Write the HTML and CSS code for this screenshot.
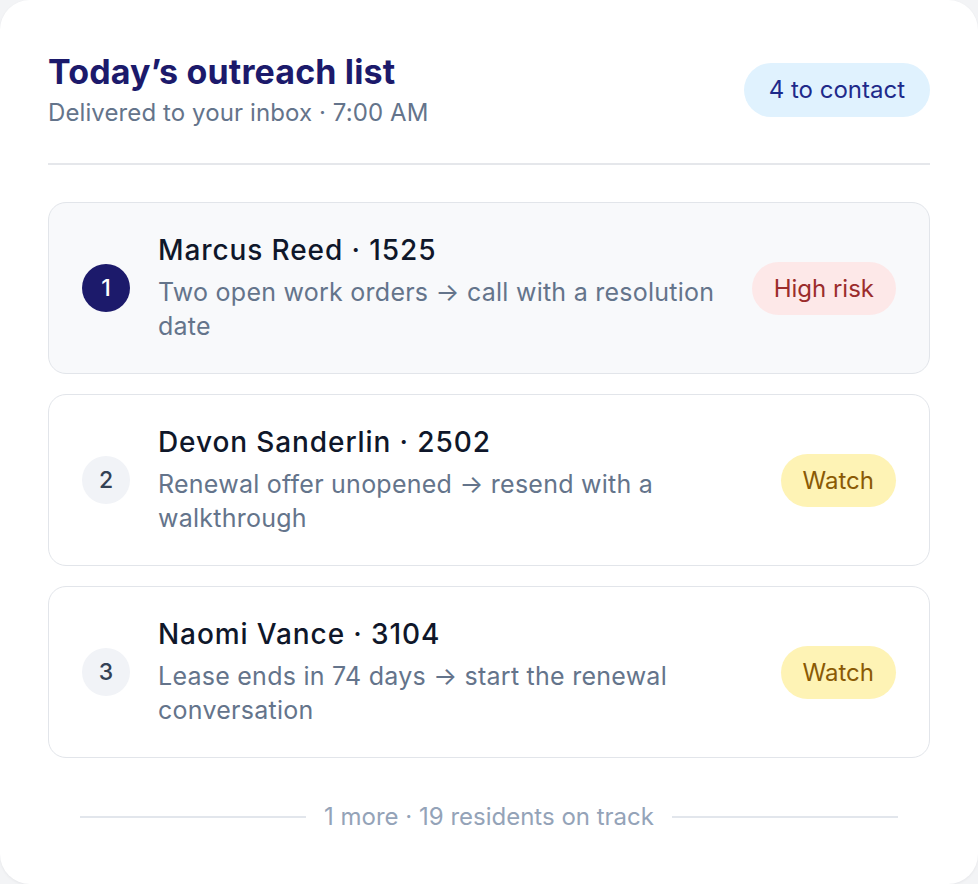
FILE: index.html
```html
<!DOCTYPE html>
<html lang="en">
<head>
<meta charset="utf-8">
<title>Today's outreach list</title>
<link rel="stylesheet" href="styles.css">
</head>
<body>
<main class="card">
  <header class="header">
    <div class="heading">
      <h1 class="title">Today’s outreach list</h1>
      <p class="subtitle">Delivered to your inbox · 7:00 AM</p>
    </div>
    <span class="count-pill">4 to contact</span>
  </header>

  <ol class="list">
    <li class="item item-top">
      <span class="num num-primary">1</span>
      <div class="body">
        <div class="name">Marcus Reed · 1525</div>
        <div class="desc">Two open work orders → call with a resolution date</div>
      </div>
      <span class="tag tag-high">High risk</span>
    </li>
    <li class="item">
      <span class="num">2</span>
      <div class="body">
        <div class="name">Devon Sanderlin · 2502</div>
        <div class="desc">Renewal offer unopened → resend with a walkthrough</div>
      </div>
      <span class="tag tag-watch">Watch</span>
    </li>
    <li class="item">
      <span class="num">3</span>
      <div class="body">
        <div class="name">Naomi Vance · 3104</div>
        <div class="desc">Lease ends in 74 days → start the renewal conversation</div>
      </div>
      <span class="tag tag-watch">Watch</span>
    </li>
  </ol>

  <footer class="footer">
    <span class="rule"></span>
    <span class="footer-text">1 more · 19 residents on track</span>
    <span class="rule"></span>
  </footer>
</main>
</body>
</html>
```

FILE: styles.css
```css
* { box-sizing: border-box; }

html, body {
  margin: 0;
  padding: 0;
  background: #f3f4f6;
}

body {
  font-family: "Inter", "Noto Sans", "Liberation Sans", sans-serif;
  -webkit-font-smoothing: antialiased;
}

.card {
  background: #ffffff;
  width: 978px;
  min-height: 884px;
  border-radius: 30px;
  padding: 52px 48px 40px;
  box-shadow: 0 1px 3px rgba(15, 23, 42, 0.06);
}

.header {
  display: flex;
  align-items: center;
  justify-content: space-between;
  padding-bottom: 35px;
  border-bottom: 2px solid #e5e7eb;
}

.title {
  margin: 0;
  font-size: 34px;
  line-height: 40px;
  font-weight: 700;
  color: #1c1a6b;
  letter-spacing: 0.15px;
}

.subtitle {
  margin: 6px 0 0;
  font-size: 24px;
  line-height: 30px;
  color: #64748b;
  letter-spacing: 0.1px;
}

.count-pill {
  background: #e0f2fe;
  color: #1e2a8a;
  font-size: 24px;
  line-height: 28px;
  padding: 13px 25px;
  border-radius: 999px;
}

.list {
  list-style: none;
  margin: 37px 0 0;
  padding: 0;
  display: flex;
  flex-direction: column;
  gap: 20px;
}

.item {
  display: flex;
  align-items: center;
  height: 172px;
  padding: 0 33px;
  border: 1.5px solid #e2e5ea;
  border-radius: 18px;
  background: #ffffff;
}

.item-top {
  background: #f8f9fb;
}

.num {
  flex: none;
  width: 48px;
  height: 48px;
  border-radius: 50%;
  background: #f1f3f7;
  color: #334155;
  display: flex;
  align-items: center;
  justify-content: center;
  font-size: 23px;
  font-weight: 500;
}

.num-primary {
  background: #1c1a6b;
  color: #ffffff;
}

.body {
  flex: 1;
  min-width: 0;
  margin-left: 28px;
  max-width: 585px;
}

.name {
  font-size: 28px;
  line-height: 34px;
  font-weight: 500;
  color: #0f172a;
  letter-spacing: 0.9px;
}

.desc {
  margin-top: 8px;
  font-size: 25px;
  line-height: 34px;
  color: #64748b;
  letter-spacing: 0.25px;
}

.tag {
  flex: none;
  margin-left: auto;
  font-size: 24px;
  line-height: 29px;
  padding: 12px 22px;
  border-radius: 999px;
}

.tag-high {
  background: #fde8e8;
  color: #9b2c2c;
}

.tag-watch {
  background: #fef3b5;
  color: #8a5a05;
}

.footer {
  display: flex;
  align-items: center;
  gap: 18px;
  margin: 44px 32px 0;
}

.rule {
  flex: 1;
  height: 2px;
  background: #e2e6ec;
}

.footer-text {
  font-size: 24px;
  line-height: 30px;
  color: #94a3b8;
}
```
